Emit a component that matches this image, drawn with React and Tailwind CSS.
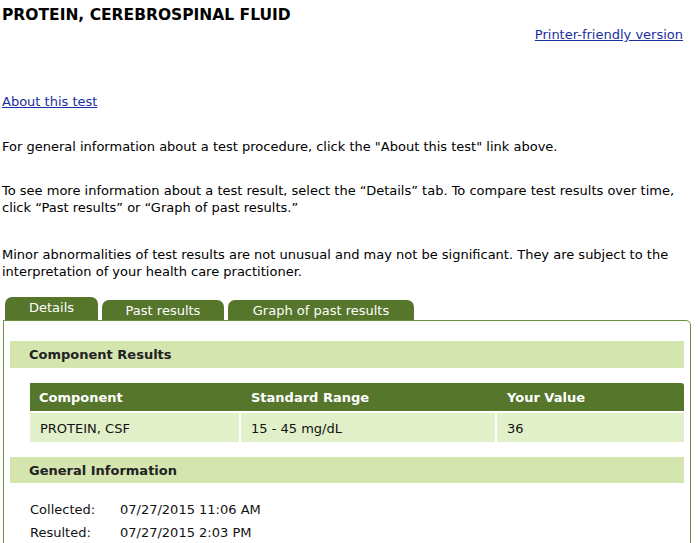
export default function App() {
  return (
    <div className="min-h-[543px] bg-white text-[13px] leading-[17px] text-black" style={{ fontFamily: '"DejaVu Sans", Verdana, sans-serif' }}>
      <div className="px-[2px] pt-[6px]">
        <h1 className="text-[15.5px] font-bold leading-[18px]">PROTEIN, CEREBROSPINAL FLUID</h1>
        <div className="mt-[2px] flex justify-end pr-[14px]">
          <a href="#" className="text-[#1a2fa0] underline">Printer-friendly version</a>
        </div>
        <div className="mt-[50px]">
          <a href="#" className="text-[#1a2fa0] underline">About this test</a>
        </div>
        <p className="mt-[28px]">For general information about a test procedure, click the "About this test" link above.</p>
        <p className="mt-[27px]">To see more information about a test result, select the “Details” tab. To compare test results over time, click “Past results” or “Graph of past results.”</p>
        <p className="mt-[30px]">Minor abnormalities of test results are not unusual and may not be significant. They are subject to the interpretation of your health care practitioner.</p>
      </div>

      {/* Tabs */}
      <div className="mt-[17px] flex items-end gap-[4px] pl-[5px]">
        <div className="flex h-[23px] w-[93px] items-center justify-center rounded-t-[7px] bg-[#56762c] pb-[3px] text-white">Details</div>
        <div className="flex h-[20px] w-[122px] items-center justify-center rounded-t-[7px] bg-[#56762c] pt-[1px] text-white">Past results</div>
        <div className="flex h-[20px] w-[186px] items-center justify-center rounded-t-[7px] bg-[#56762c] pt-[1px] text-white">Graph of past results</div>
      </div>

      {/* Panel */}
      <div className="ml-[3px] w-[688px] rounded-tr-[5px] border border-[#6e9140] px-[6px] pt-[20px] pb-[20px]">
        <div className="flex h-[27px] items-center bg-[#d4e5b0] pl-[19px] font-bold text-[#222]">Component Results</div>

        <div className="mt-[15px] ml-[20px]">
          <div className="grid h-[28px] grid-cols-[209px_254px_1fr] gap-[2px] items-center rounded-tr-[3px] bg-[#56762c] font-bold text-white">
            <div className="pl-[9px]">Component</div>
            <div className="pl-[10px]">Standard Range</div>
            <div className="pl-[10px]">Your Value</div>
          </div>
          <div className="mt-[2px] grid h-[29px] grid-cols-[209px_254px_1fr] gap-[2px] text-[#111]">
            <div className="flex items-center bg-[#e2f0ca] pl-[10px] pt-[1px]">PROTEIN, CSF</div>
            <div className="flex items-center bg-[#e2f0ca] pl-[10px] pt-[1px]">15 - 45 mg/dL</div>
            <div className="flex items-center bg-[#e2f0ca] pl-[10px] pt-[1px]">36</div>
          </div>
        </div>

        <div className="mt-[15px] flex h-[26px] items-center bg-[#d4e5b0] pl-[19px] font-bold text-[#222]">General Information</div>

        <div className="mt-[15px] ml-[20px] text-[#111]">
          <div className="flex h-[23px] items-center">
            <span className="w-[90px]">Collected:</span>
            <span>07/27/2015 11:06 AM</span>
          </div>
          <div className="flex h-[23px] items-center">
            <span className="w-[90px]">Resulted:</span>
            <span>07/27/2015 2:03 PM</span>
          </div>
        </div>
      </div>
    </div>
  );
}
